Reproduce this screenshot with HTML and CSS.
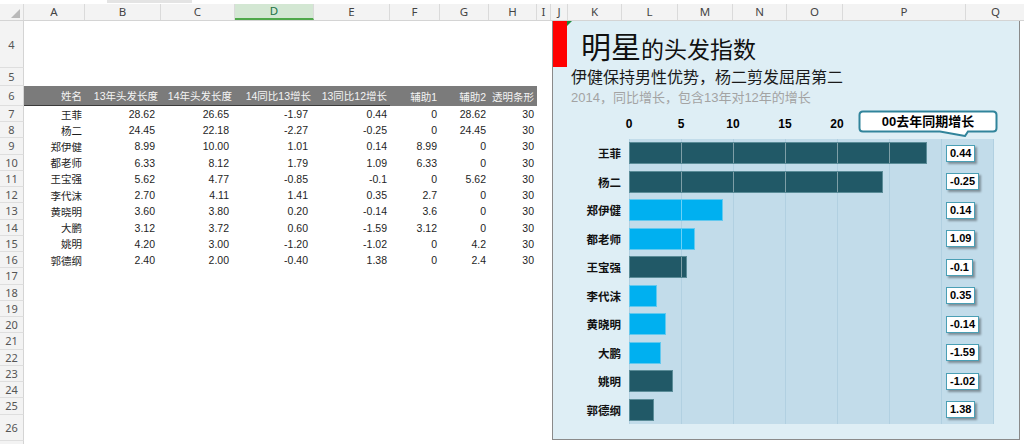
FILE: index.html
```html
<!DOCTYPE html>
<html lang="zh">
<head>
<meta charset="utf-8">
<title>明星的头发指数</title>
<link rel="stylesheet" href="styles.css">
</head>
<body>
<div class="topbar"><span class="tab"></span></div>
<div class="colhead">
  <div class="w-rh corner"><span class="tri"></span></div>
  <div class="w-a">A</div><div class="w-b">B</div><div class="w-c">C</div><div class="w-d sel">D</div>
  <div class="w-e">E</div><div class="w-f">F</div><div class="w-g">G</div><div class="w-h">H</div>
  <div class="w-i">I</div><div class="w-j">J</div><div class="w-k">K</div><div class="w-l">L</div>
  <div class="w-m">M</div><div class="w-n">N</div><div class="w-o">O</div><div class="w-p">P</div><div class="w-q">Q</div>
</div>
<div class="sheet">
  <div class="rows">
    <div class="row r4"><div class="rh">4</div></div>
    <div class="row r5"><div class="rh">5</div></div>
    <div class="row r6 hrow"><div class="rh">6</div>
      <div class="cell w-a ul">姓名</div><div class="cell w-b ul">13年头发长度</div><div class="cell w-c ul">14年头发长度</div><div class="cell w-d ul">14同比13增长</div><div class="cell w-e ul">13同比12增长</div><div class="cell w-f">辅助1</div><div class="cell w-g">辅助2</div><div class="cell w-h">透明条形</div>
    </div>
    <div class="row r7"><div class="rh">7</div><div class="cell w-a">王菲</div><div class="cell w-b pad">28.62</div><div class="cell w-c pad">26.65</div><div class="cell w-d pad">-1.97</div><div class="cell w-e">0.44</div><div class="cell w-f">0</div><div class="cell w-g">28.62</div><div class="cell w-h">30</div></div>
    <div class="row"><div class="rh">8</div><div class="cell w-a">杨二</div><div class="cell w-b pad">24.45</div><div class="cell w-c pad">22.18</div><div class="cell w-d pad">-2.27</div><div class="cell w-e">-0.25</div><div class="cell w-f">0</div><div class="cell w-g">24.45</div><div class="cell w-h">30</div></div>
    <div class="row"><div class="rh">9</div><div class="cell w-a">郑伊健</div><div class="cell w-b pad">8.99</div><div class="cell w-c pad">10.00</div><div class="cell w-d pad">1.01</div><div class="cell w-e">0.14</div><div class="cell w-f">8.99</div><div class="cell w-g">0</div><div class="cell w-h">30</div></div>
    <div class="row"><div class="rh">10</div><div class="cell w-a">都老师</div><div class="cell w-b pad">6.33</div><div class="cell w-c pad">8.12</div><div class="cell w-d pad">1.79</div><div class="cell w-e">1.09</div><div class="cell w-f">6.33</div><div class="cell w-g">0</div><div class="cell w-h">30</div></div>
    <div class="row"><div class="rh">11</div><div class="cell w-a">王宝强</div><div class="cell w-b pad">5.62</div><div class="cell w-c pad">4.77</div><div class="cell w-d pad">-0.85</div><div class="cell w-e">-0.1</div><div class="cell w-f">0</div><div class="cell w-g">5.62</div><div class="cell w-h">30</div></div>
    <div class="row"><div class="rh">12</div><div class="cell w-a">李代沫</div><div class="cell w-b pad">2.70</div><div class="cell w-c pad">4.11</div><div class="cell w-d pad">1.41</div><div class="cell w-e">0.35</div><div class="cell w-f">2.7</div><div class="cell w-g">0</div><div class="cell w-h">30</div></div>
    <div class="row"><div class="rh">13</div><div class="cell w-a">黄晓明</div><div class="cell w-b pad">3.60</div><div class="cell w-c pad">3.80</div><div class="cell w-d pad">0.20</div><div class="cell w-e">-0.14</div><div class="cell w-f">3.6</div><div class="cell w-g">0</div><div class="cell w-h">30</div></div>
    <div class="row"><div class="rh">14</div><div class="cell w-a">大鹏</div><div class="cell w-b pad">3.12</div><div class="cell w-c pad">3.72</div><div class="cell w-d pad">0.60</div><div class="cell w-e">-1.59</div><div class="cell w-f">3.12</div><div class="cell w-g">0</div><div class="cell w-h">30</div></div>
    <div class="row"><div class="rh">15</div><div class="cell w-a">姚明</div><div class="cell w-b pad">4.20</div><div class="cell w-c pad">3.00</div><div class="cell w-d pad">-1.20</div><div class="cell w-e">-1.02</div><div class="cell w-f">0</div><div class="cell w-g">4.2</div><div class="cell w-h">30</div></div>
    <div class="row"><div class="rh">16</div><div class="cell w-a">郭德纲</div><div class="cell w-b pad">2.40</div><div class="cell w-c pad">2.00</div><div class="cell w-d pad">-0.40</div><div class="cell w-e">1.38</div><div class="cell w-f">0</div><div class="cell w-g">2.4</div><div class="cell w-h">30</div></div>
    <div class="row"><div class="rh">17</div></div>
    <div class="row"><div class="rh">18</div></div>
    <div class="row"><div class="rh">19</div></div>
    <div class="row"><div class="rh">20</div></div>
    <div class="row"><div class="rh">21</div></div>
    <div class="row"><div class="rh">22</div></div>
    <div class="row"><div class="rh">23</div></div>
    <div class="row"><div class="rh">24</div></div>
    <div class="row"><div class="rh">25</div></div>
    <div class="row r26"><div class="rh">26</div></div>
    <div class="row r27"><div class="rh"></div></div>
  </div>

  <div class="chart">
    <span class="flag"></span>
    <div class="title-row">
      <div class="redbar"></div>
      <h1><span class="big">明星</span>的头发指数</h1>
    </div>
    <div class="sub">伊健保持男性优势，杨二剪发屈居第二</div>
    <div class="sub2">2014，同比增长，包含13年对12年的增长</div>
    <div class="axis-row">
      <div class="axis"><span>0</span><span>5</span><span>10</span><span>15</span><span>20</span></div>
      <div class="callout">
        <svg class="bubble" width="140" height="27" viewBox="0 0 140 27">
          <path d="M5 1.5 H135 Q138.5 1.5 138.5 5 V18 Q138.5 21.5 135 21.5 H110 L107 26 L82 21.5 H5 Q1.5 21.5 1.5 18 V5 Q1.5 1.5 5 1.5 Z" fill="#fff" stroke="#31849b" stroke-width="2"/>
        </svg>
        <span class="callout-text">00去年同期增长</span>
      </div>
    </div>
    <div class="chart-body">
      <div class="cats">
        <div class="cat">王菲</div><div class="cat">杨二</div><div class="cat">郑伊健</div><div class="cat">都老师</div><div class="cat">王宝强</div>
        <div class="cat">李代沫</div><div class="cat">黄晓明</div><div class="cat">大鹏</div><div class="cat">姚明</div><div class="cat">郭德纲</div>
      </div>
      <div class="plot">
        <div class="prow"><div class="bar dark" style="width:297.6px"></div><div class="vlab">0.44</div></div>
        <div class="prow"><div class="bar dark" style="width:254.3px"></div><div class="vlab">-0.25</div></div>
        <div class="prow"><div class="bar cyan" style="width:93.5px"></div><div class="vlab">0.14</div></div>
        <div class="prow"><div class="bar cyan" style="width:65.8px"></div><div class="vlab">1.09</div></div>
        <div class="prow"><div class="bar dark" style="width:58.4px"></div><div class="vlab">-0.1</div></div>
        <div class="prow"><div class="bar cyan" style="width:28.1px"></div><div class="vlab">0.35</div></div>
        <div class="prow"><div class="bar cyan" style="width:37.4px"></div><div class="vlab">-0.14</div></div>
        <div class="prow"><div class="bar cyan" style="width:32.4px"></div><div class="vlab">-1.59</div></div>
        <div class="prow"><div class="bar dark" style="width:43.7px"></div><div class="vlab">-1.02</div></div>
        <div class="prow"><div class="bar dark" style="width:25px"></div><div class="vlab">1.38</div></div>
      </div>
    </div>
  </div>
</div>
</body>
</html>
```

FILE: styles.css
```css
* { box-sizing: border-box; margin: 0; padding: 0; }

body {
  width: 1024px;
  height: 444px;
  overflow: hidden;
  background: #fff;
  font-family: "Liberation Sans", "Noto Sans CJK SC", sans-serif;
  color: #222;
}

/* top strip */
.topbar {
  height: 4px;
  padding-left: 107px;
  background: #fff;
}
.tab {
  display: block;
  width: 85px;
  height: 3px;
  background: #e4e4e4;
}

/* column widths */
.w-rh { width: 24px; flex: none; }
.w-a { width: 61px; flex: none; }
.w-b { width: 76px; flex: none; }
.w-c { width: 74px; flex: none; }
.w-d { width: 79px; flex: none; }
.w-e { width: 76px; flex: none; }
.w-f { width: 50px; flex: none; }
.w-g { width: 49px; flex: none; }
.w-h { width: 48px; flex: none; }
.w-i { width: 14px; flex: none; }
.w-j { width: 17px; flex: none; }
.w-k { width: 54px; flex: none; }
.w-l { width: 56px; flex: none; }
.w-m { width: 55px; flex: none; }
.w-n { width: 54px; flex: none; }
.w-o { width: 56px; flex: none; }
.w-p { width: 123px; flex: none; }
.w-q { width: 60px; flex: none; }

/* column header */
.colhead {
  display: flex;
  height: 17px;
  background: #f3f3f3;
  border-bottom: 1px solid #d4d4d4;
  font-family: "Noto Sans", "Liberation Sans", sans-serif;
  font-size: 11.5px;
  color: #444;
}
.colhead > div {
  display: flex;
  align-items: center;
  justify-content: center;
  border-right: 1px solid #dadada;
  line-height: 1;
}
.colhead > .sel {
  background: #d3e7d3;
  color: #217346;
  border-bottom: 2px solid #4ea84a;
}
.corner {
  position: relative;
}
.tri {
  position: absolute;
  right: 3px;
  bottom: 2px;
  width: 0;
  height: 0;
  border-left: 9px solid transparent;
  border-bottom: 9px solid #b9b9b9;
}

/* sheet body */
.sheet {
  position: relative;
}
.rows {
  display: flex;
  flex-direction: column;
}
.row {
  display: flex;
  height: 16.25px;
  font-size: 10.5px;
}
.r4 { height: 47px; }
.r5 { height: 18px; }
.r6 { height: 20px; }
.r7 { height: 16px; }
.r26 { height: 26px; }
.r27 { height: 8px; }

.rh {
  width: 24px;
  flex: none;
  display: flex;
  align-items: center;
  justify-content: center;
  background: #f3f3f3;
  border-right: 1px solid #d4d4d4;
  border-bottom: 1px solid #dedede;
  font-family: "Noto Sans", "Liberation Sans", sans-serif;
  font-size: 11px;
  color: #555;
}

.cell {
  display: flex;
  align-items: center;
  justify-content: flex-end;
  padding-right: 3px;
  white-space: nowrap;
  color: #1e1e1e;
}
.cell.pad { padding-right: 6px; }

.hrow .cell {
  background: #7b7b7b;
  color: #f4f4f4;
}
.hrow .cell.ul {
  border-bottom: 1px solid #3a3a3a;
}

/* chart object */
.chart {
  position: absolute;
  left: 552px;
  top: 0;
  width: 468px;
  height: 419px;
  background: #deeef5;
  border: 1px solid #8a8a8a;
  border-top: none;
  font-family: "Liberation Sans", "Noto Sans CJK SC", sans-serif;
}
.flag {
  position: absolute;
  left: 14px;
  top: 0;
  width: 0;
  height: 0;
  border-top: 5px solid #1d8b3e;
  border-right: 5px solid transparent;
}

.title-row {
  display: flex;
  align-items: center;
  height: 46px;
}
.redbar {
  width: 14px;
  height: 46px;
  background: #ff0000;
  flex: none;
}
.title-row h1 {
  margin-left: 14px;
  font-family: "Noto Sans CJK SC", sans-serif;
  font-weight: 400;
  font-size: 23px;
  line-height: 1;
  color: #111;
  margin-top: 2px;
}
.title-row .big {
  font-size: 30px;
}

.sub {
  margin-top: 1px;
  margin-left: 18px;
  font-size: 16px;
  line-height: 20px;
  color: #1a1a1a;
}
.sub2 {
  margin-top: 2px;
  margin-left: 18px;
  font-size: 13px;
  line-height: 16px;
  color: #a3a3a3;
}

.axis-row {
  display: flex;
  margin-top: 4px;
  height: 25px;
}
.axis {
  display: grid;
  grid-template-columns: repeat(5, 52px);
  margin-left: 50px;
  padding-top: 7px;
  font-weight: 700;
  font-size: 12px;
  line-height: 14px;
  text-align: center;
  color: #000;
}
.callout {
  position: relative;
  width: 140px;
  height: 27px;
  margin-left: -5px;
}
.bubble {
  position: absolute;
  left: 0;
  top: 0;
}
.callout-text {
  position: relative;
  display: block;
  height: 22px;
  line-height: 23px;
  text-align: center;
  font-weight: 700;
  font-size: 13px;
  color: #000;
}

.chart-body {
  display: flex;
  margin-top: 4px;
}
.cats {
  width: 68px;
  flex: none;
}
.cat {
  height: 28.5px;
  display: flex;
  align-items: center;
  justify-content: flex-end;
  font-family: "Noto Sans CJK SC", sans-serif;
  font-weight: 700;
  font-size: 11.5px;
  color: #111;
}
.plot {
  margin-left: 8px;
  width: 365px;
  height: 285px;
  background-color: #c2dcea;
  background-image: repeating-linear-gradient(90deg, #b1d0e1 0 1px, transparent 1px 52px);
}
.prow {
  height: 28.5px;
  display: grid;
  grid-template-columns: 317px auto;
  align-items: center;
  justify-items: start;
}
.bar {
  height: 22px;
  border: 1px solid;
  background-origin: border-box;
  background-image: repeating-linear-gradient(90deg, rgba(255,255,255,0.42) 0 1px, transparent 1px 52px);
}
.bar.dark {
  background-color: #215967;
  border-color: #5a8c98;
}
.bar.cyan {
  background-color: #00b0f0;
  border-color: #62c9ef;
}
.vlab {
  background: #fff;
  border: 1px solid #4a9fb5;
  box-shadow: 2px 2px 2px rgba(0, 0, 0, 0.35);
  font-weight: 700;
  font-size: 11px;
  line-height: 15px;
  padding: 0 3px;
  color: #000;
}
```
